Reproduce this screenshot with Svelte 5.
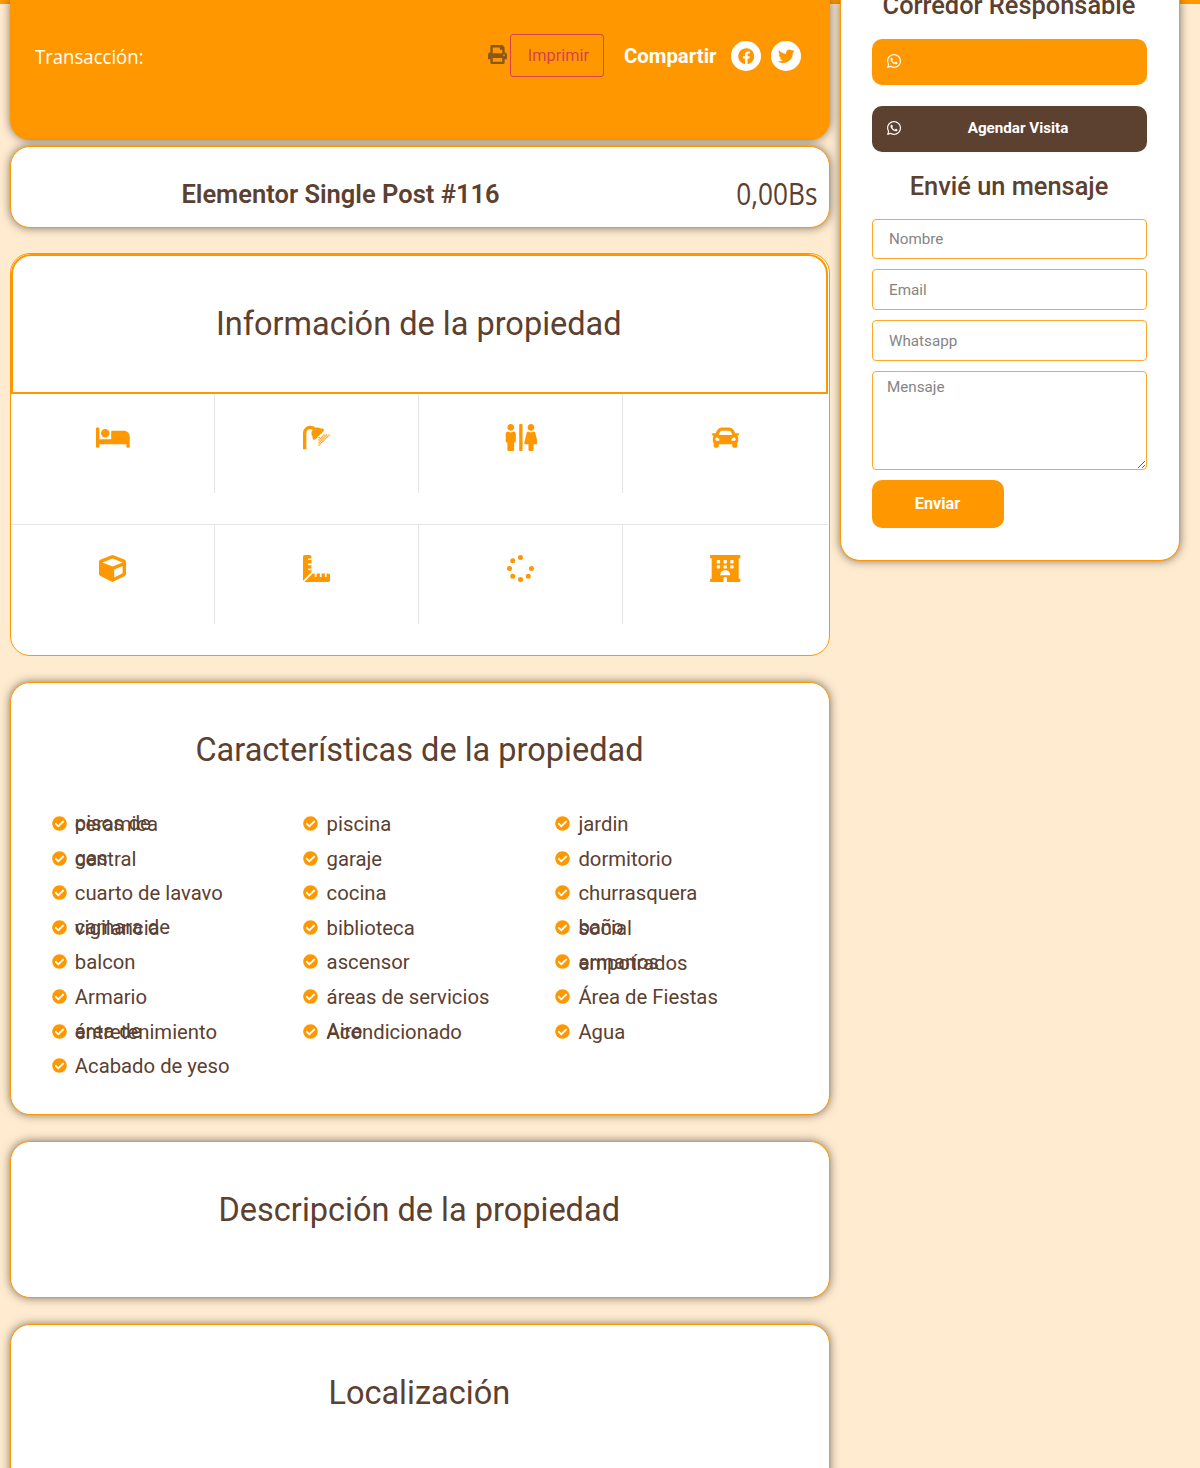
<script>
  const whatsapp =
    'M380.9 97.1C339 55.1 283.2 32 223.9 32c-122.4 0-222 99.6-222 222 0 39.1 10.2 77.3 29.6 111L0 480l117.7-30.9c32.4 17.7 68.9 27 106.1 27h.1c122.3 0 224.1-99.6 224.1-222 0-59.3-25.2-115-67.1-157zm-157 341.6c-33.2 0-65.7-8.9-94-25.7l-6.7-4-69.8 18.3L72 359.2l-4.4-7c-18.5-29.4-28.2-63.3-28.2-98.2 0-101.7 82.8-184.5 184.6-184.5 49.3 0 95.6 19.2 130.4 54.1 34.8 34.9 56.2 81.2 56.1 130.5 0 101.8-84.9 184.6-186.6 184.6zm101.2-138.2c-5.5-2.8-32.8-16.2-37.9-18-5.1-1.9-8.8-2.8-12.5 2.8-3.7 5.6-14.3 18-17.6 21.8-3.2 3.7-6.5 4.2-12 1.4-32.6-16.3-54-29.1-75.5-66-5.7-9.8 5.7-9.1 16.3-30.3 1.8-3.7.9-6.9-.5-9.7-1.4-2.8-12.5-30.1-17.1-41.2-4.5-10.8-9.1-9.3-12.5-9.5-3.2-.2-6.9-.2-10.6-.2-3.7 0-9.7 1.4-14.8 6.9-5.1 5.6-19.4 19-19.4 46.3 0 27.3 19.9 53.7 22.6 57.4 2.8 3.7 39.1 59.7 94.8 83.8 35.2 15.2 49 16.5 66.6 13.9 10.7-1.6 32.8-13.4 37.4-26.4 4.6-13 4.6-24.1 3.2-26.4-1.3-2.5-5-3.9-10.5-6.6z';
  const facebook =
    'M504 256C504 119 393 8 256 8S8 119 8 256c0 123.78 90.69 226.38 209.25 245V327.69h-63V256h63v-54.64c0-62.15 37-96.48 93.67-96.48 27.14 0 55.52 4.84 55.52 4.84v61h-31.28c-30.8 0-40.41 19.12-40.41 38.73V256h68.78l-11 71.69h-57.78V501C413.31 482.38 504 379.78 504 256z';
  const twitter =
    'M459.37 151.716c.325 4.548.325 9.097.325 13.645 0 138.72-105.583 298.558-298.558 298.558-59.452 0-114.68-17.219-161.137-47.106 8.447.974 16.568 1.299 25.34 1.299 49.055 0 94.213-16.568 130.274-44.832-46.132-.975-84.792-31.188-98.112-72.772 6.498.974 12.995 1.624 19.818 1.624 9.421 0 18.843-1.3 27.614-3.573-48.081-9.747-84.143-51.98-84.143-102.985v-1.299c13.969 7.797 30.214 12.67 47.431 13.319-28.264-18.843-46.781-51.005-46.781-87.391 0-19.492 5.197-37.36 14.294-52.954 51.655 63.675 129.3 105.258 216.365 109.807-1.624-7.797-2.599-15.918-2.599-24.04 0-57.828 46.782-104.934 104.934-104.934 30.213 0 57.502 12.67 76.67 33.137 23.715-4.548 46.456-13.32 66.599-25.34-7.798 24.366-24.366 44.833-46.132 57.827 21.117-2.273 41.584-8.122 60.426-16.243-14.292 20.791-32.161 39.308-52.628 54.253z';
  const printer =
    'M448 192V77.25c0-8.49-3.37-16.62-9.37-22.63L393.37 9.37c-6-6-14.14-9.37-22.63-9.37H96C78.33 0 64 14.33 64 32v160c-35.35 0-64 28.65-64 64v112c0 8.84 7.16 16 16 16h48v96c0 17.67 14.33 32 32 32h320c17.67 0 32-14.33 32-32v-96h48c8.84 0 16-7.16 16-16V256c0-35.35-28.65-64-64-64zm-64 256H128v-96h256v96zm0-224H128V64h192v48c0 8.84 7.16 16 16 16h48v96zm48 72c-13.25 0-24-10.75-24-24 0-13.26 10.75-24 24-24s24 10.74 24 24c0 13.25-10.75 24-24 24z';
  const check =
    'M504 256c0 136.967-111.033 248-248 248S8 392.967 8 256 119.033 8 256 8s248 111.033 248 248zM227.314 387.314l184-184c6.248-6.248 6.248-16.379 0-22.627l-22.627-22.627c-6.248-6.249-16.379-6.249-22.628 0L216 308.118l-70.059-70.059c-6.248-6.248-16.379-6.248-22.628 0l-22.627 22.627c-6.248 6.248-6.248 16.379 0 22.627l104 104c6.249 6.249 16.379 6.249 22.628.001z';

  const dot = (x, y, r) => `M${x - r} ${y}a${r} ${r} 0 1 0 ${2 * r} 0a${r} ${r} 0 1 0 ${-2 * r} 0z`;
  const pane = (x, y) => `M${x + 12} ${y}h40q12 0 12 12v40q0 12-12 12h-40q-12 0-12-12v-40q0-12 12-12z`;

  // Spray droplets below the shower head, staggered row by row.
  const drops = [
    [400, 208], [448, 208], [496, 208],
    [376, 232], [424, 232], [472, 232],
    [304, 256], [352, 256], [400, 256], [448, 256],
    [328, 280], [376, 280], [424, 280],
    [304, 304], [352, 304], [400, 304],
    [328, 328], [376, 328],
    [304, 352], [352, 352],
    [328, 376],
    [304, 400]
  ];

  const facts = [
    {
      w: 640,
      d: 'M176 256c44.11 0 80-35.89 80-80s-35.89-80-80-80-80 35.89-80 80 35.89 80 80 80zm352-128H304c-8.84 0-16 7.16-16 16v144H64V80c0-8.84-7.16-16-16-16H16C7.16 64 0 71.16 0 80v352c0 8.84 7.16 16 16 16h32c8.84 0 16-7.16 16-16v-48h512v48c0 8.84 7.16 16 16 16h32c8.84 0 16-7.16 16-16V240c0-61.86-50.14-112-112-112z'
    },
    {
      w: 512,
      d:
        'M389.66 135.6L231.6 293.66c-9.37 9.37-24.57 9.37-33.94 0l-11.32-11.32c-9.37-9.37-9.37-24.57 0-33.94l.11-.11c-34.03-40.21-35.16-98.94-3.39-140.38-11.97-7.55-26.14-11.91-41.3-11.91C98.88 96 64 130.88 64 173.76V480H0V173.76C0 95.59 63.59 32 141.76 32c36.93 0 71.61 14.2 97.74 39.72 30-7 70-3 104.86 18.28 9.37-9.37 24-7 33.98.34l11.32 11.32c9.37 9.37 9.37 24.57 0 33.94z' +
        drops.map(([x, y]) => dot(x, y, 15)).join('')
    },
    {
      w: 640,
      d: 'M128 128c35.3 0 64-28.7 64-64S163.3 0 128 0 64 28.7 64 64s28.7 64 64 64zm384 0c35.3 0 64-28.7 64-64S547.3 0 512 0s-64 28.7-64 64 28.7 64 64 64zm127.3 226.5l-45.6-185.8c-3.3-13.5-15.5-23-29.8-24.2-15 9.7-32.8 15.5-52 15.5-19.2 0-37-5.8-52-15.5-14.3 1.2-26.5 10.7-29.8 24.2l-45.6 185.8C381 369.6 393 384 409.2 384H464v104c0 13.3 10.7 24 24 24h48c13.3 0 24-10.7 24-24V384h54.8c16.2 0 28.2-14.4 24.5-29.5zM336 0h-32c-8.8 0-16 7.2-16 16v480c0 8.8 7.2 16 16 16h32c8.8 0 16-7.2 16-16V16c0-8.8-7.2-16-16-16zM180.1 144.4c-15 9.8-32.9 15.6-52.1 15.6-19.2 0-37.1-5.8-52.1-15.6C51.3 146.5 32 166.9 32 192v136c0 13.3 10.7 24 24 24h8v136c0 13.3 10.7 24 24 24h80c13.3 0 24-10.7 24-24V352h8c13.3 0 24-10.7 24-24V192c0-25.1-19.3-45.5-43.9-47.6z'
    },
    {
      w: 512,
      d: 'M499.99 176h-59.87l-16.64-41.6C406.38 91.63 365.57 64 319.5 64h-127c-46.06 0-86.88 27.63-103.99 70.4L71.87 176H12.01C4.2 176-1.53 183.34.37 190.91l6 24C7.7 220.25 12.5 224 18.01 224h20.07C24.65 235.73 16 252.78 16 272v48c0 16.12 6.16 30.67 16 41.93V416c0 17.67 14.33 32 32 32h32c17.67 0 32-14.33 32-32v-32h256v32c0 17.67 14.33 32 32 32h32c17.67 0 32-14.33 32-32v-54.07c9.84-11.25 16-25.8 16-41.93v-48c0-19.22-8.65-36.27-22.07-48H494c5.51 0 10.31-3.75 11.64-9.09l6-24c1.89-7.57-3.84-14.91-11.65-14.91zm-352.06-17.83c7.29-18.22 24.94-30.17 44.57-30.17h127c19.63 0 37.28 11.95 44.57 30.17L384 208H128l19.93-49.83zM96 319.8c-19.2 0-32-12.76-32-31.9S76.8 256 96 256s48 28.71 48 47.85-28.8 15.95-48 15.95zm320 0c-19.2 0-48 3.19-48-15.95S396.8 256 416 256s32 12.76 32 31.9-12.8 31.9-32 31.9z'
    },
    {
      w: 512,
      d: 'M239.1 6.3l-208 78c-18.7 7-31.1 25-31.1 45v225.1c0 18.2 10.3 34.8 26.5 42.9l208 104c13.5 6.8 29.4 6.8 42.9 0l208-104c16.3-8.1 26.5-24.8 26.5-42.9V129.3c0-20-12.4-37.9-31.1-44.9l-208-78C262 2.2 250 2.2 239.1 6.3zM256 68.4l192 72v1.1l-192 78-192-78v-1.1l192-72zm32 356V275.5l160-65v133.9l-160 80z'
    },
    {
      w: 512,
      d: 'M160 288h-56c-4.42 0-8-3.58-8-8v-16c0-4.42 3.58-8 8-8h56v-64h-56c-4.42 0-8-3.58-8-8v-16c0-4.42 3.58-8 8-8h56V96h-56c-4.42 0-8-3.58-8-8V72c0-4.42 3.58-8 8-8h56V32c0-17.67-14.33-32-32-32H32C14.33 0 0 14.33 0 32v448c0 2.77.91 5.24 1.57 7.8L160 329.38V288zm320 64h-32v56c0 4.42-3.58 8-8 8h-16c-4.42 0-8-3.58-8-8v-56h-64v56c0 4.42-3.58 8-8 8h-16c-4.42 0-8-3.58-8-8v-56h-64v56c0 4.42-3.58 8-8 8h-16c-4.42 0-8-3.58-8-8v-56h-41.37L24.2 510.43c2.56.66 5.04 1.57 7.8 1.57h448c17.67 0 32-14.33 32-32v-96c0-17.67-14.33-32-32-32z'
    },
    {
      w: 512,
      d: [[256, 48], [256, 464], [48, 256], [464, 256], [109, 109], [109, 403], [403, 403]]
        .map(([x, y]) => dot(x, y, 48))
        .join('')
    },
    {
      w: 576,
      d:
        'M560 64c8.84 0 16-7.16 16-16V16c0-8.84-7.16-16-16-16H16C7.16 0 0 7.16 0 16v32c0 8.84 7.16 16 16 16h15.98v384H16c-8.84 0-16 7.16-16 16v32c0 8.84 7.16 16 16 16h240v-80c0-8.8 7.2-16 16-16h32c8.8 0 16 7.2 16 16v80h240c8.84 0 16-7.16 16-16v-32c0-8.84-7.16-16-16-16h-16V64h16z' +
        [128, 256, 384].map((x) => pane(x, 96) + pane(x, 192)).join('') +
        'M208 384q-18 0-14-16a95 90 0 0 1 188 0q4 16-14 16z'
    }
  ];

  // A feature with two entries stacks both lines on top of each other.
  const features = [
    [['pisos de', 'ceramica'], ['gas', 'central'], ['cuarto de lavavo'], ['camara de', 'vigilancia'], ['balcon'], ['Armario'], ['área de', 'entretenimiento'], ['Acabado de yeso']],
    [['piscina'], ['garaje'], ['cocina'], ['biblioteca'], ['ascensor'], ['áreas de servicios'], ['Aire', 'Acondicionado']],
    [['jardin'], ['dormitorio'], ['churrasquera'], ['baño', 'social'], ['armaríos', 'empotrados'], ['Área de Fiestas'], ['Agua']]
  ];
</script>

{#snippet icon(d, w, cls)}
  <svg class={cls} viewBox="0 0 {w} 512" aria-hidden="true"><path fill-rule="evenodd" {d} /></svg>
{/snippet}

<div class="page">
  <div class="stripe"></div>
  <div class="columns">
    <main>
      <section class="hero">
        <span class="transaction">Transacción:</span>
        {@render icon(printer, 512, 'printer')}
        <button class="print">Imprimir</button>
        <strong class="share">Compartir</strong>
        <a class="social" href="#facebook" aria-label="Facebook">{@render icon(facebook, 512, 'social-icon')}</a>
        <a class="social" href="#twitter" aria-label="Twitter">{@render icon(twitter, 512, 'social-icon')}</a>
      </section>

      <section class="card title">
        <h1>Elementor Single Post #116</h1>
        <span class="price">0,00Bs</span>
      </section>

      <section class="card info">
        <div class="info-head"><h2>Información de la propiedad</h2></div>
        <div class="facts">
          {#each facts as fact}
            <div class="fact"><div class="fact-in">{@render icon(fact.d, fact.w, 'fact-icon')}</div></div>
          {/each}
        </div>
      </section>

      <section class="card traits">
        <h2>Características de la propiedad</h2>
        <div class="lists">
          {#each features as column}
            <ul>
              {#each column as lines}
                <li>
                  {@render icon(check, 512, 'check')}
                  <span class="label">{#each lines as line}<span>{line}</span>{/each}</span>
                </li>
              {/each}
            </ul>
          {/each}
        </div>
      </section>

      <section class="card about"><h2>Descripción de la propiedad</h2></section>
      <section class="card place"><h2>Localización</h2></section>
    </main>

    <aside>
      <h3 class="agent">Corredor Responsable</h3>
      <a class="wa" href="#contacto" aria-label="WhatsApp">{@render icon(whatsapp, 448, 'wa-icon')}<span></span></a>
      <a class="wa dark" href="#visita">{@render icon(whatsapp, 448, 'wa-icon')}<span>Agendar Visita</span></a>
      <h3 class="write">Envié un mensaje</h3>
      <form>
        <input placeholder="Nombre" />
        <input placeholder="Email" />
        <input placeholder="Whatsapp" />
        <textarea placeholder="Mensaje"></textarea>
        <button type="button" class="send">Enviar</button>
      </form>
    </aside>
  </div>
</div>

<style>
  :global(body) {
    margin: 0;
    background: #ffebcf;
  }
  .page,
  .page * {
    box-sizing: border-box;
  }
  .page {
    height: 1468px;
    overflow: hidden;
    background: #ffebcf;
    font-family: Roboto, sans-serif;
    color: #5c4030;
  }
  svg {
    display: block;
    fill: currentColor;
    flex: none;
  }
  h1,
  h2,
  h3,
  ul {
    margin: 0;
    padding: 0;
  }
  .stripe {
    height: 4px;
    background: #ff9800;
  }
  .columns {
    display: flex;
    align-items: flex-start;
    gap: 10px;
    margin-top: -4px;
    padding-left: 10px;
  }
  main {
    width: 820px;
    display: flex;
    flex-direction: column;
  }
  .hero {
    height: 140px;
    border-radius: 0 0 20px 20px;
    background: #ff9800;
    box-shadow: 0 0 10px rgba(0, 0, 0, 0.5);
    display: flex;
    align-items: center;
    padding: 0 29px 28px 25px;
    color: #fff;
  }
  .transaction {
    font: 400 20.3px/28px 'Open Sans', sans-serif;
    transform: scaleX(0.915);
    transform-origin: left center;
    padding-bottom: 1px;
    margin-right: auto;
  }
  .printer {
    width: 19px;
    height: 19px;
    color: #8a5818;
    margin: -4px 3px 0 0;
  }
  .print {
    width: 94px;
    height: 43px;
    margin-top: -1px;
    border: 1px solid #d9414e;
    border-radius: 3px;
    background: none;
    color: #d9414e;
    font: 400 16.3px/24px Roboto, sans-serif;
    padding: 0 0 0 3px;
  }
  .share {
    font-size: 20.4px;
    font-weight: 700;
    margin: 0 14.5px 0 20px;
  }
  .social {
    width: 30px;
    height: 30px;
    border-radius: 50%;
    background: #fff;
    color: #ff9800;
    display: grid;
    place-items: center;
  }
  .social + .social {
    margin-left: 10px;
  }
  .social-icon {
    width: 16.5px;
    height: 16.5px;
  }
  .card {
    background: #fff;
    border: 1px solid #ff9800;
    border-radius: 20px;
    box-shadow: 0 0 10px rgba(0, 0, 0, 0.5);
  }
  .title {
    height: 82px;
    margin-top: 5.5px;
    display: grid;
    grid-template-columns: 659px 1fr;
    align-items: center;
    padding: 13px 12px 0 0;
  }
  h1 {
    padding-top: 1px;
    text-align: center;
    font-size: 25.5px;
    font-weight: 600;
    line-height: 30px;
  }
  .price {
    justify-self: end;
    font: 400 30.5px/40px 'Open Sans', sans-serif;
    transform: scaleX(0.86);
    transform-origin: right center;
  }
  .info {
    height: 403px;
    margin-top: 25.5px;
    box-shadow: none;
  }
  .info-head {
    height: 139.5px;
    margin-right: 1px;
    border: 2px solid #ff9800;
    border-radius: 20px 20px 0 0;
    display: grid;
    place-items: center;
  }
  h2 {
    padding-right: 1.5px;
    text-align: center;
    font-size: 32.5px;
    font-weight: 400;
    line-height: 40px;
  }
  .facts {
    display: grid;
    grid-template-columns: 204.4px 203.6px 204px 1fr;
    padding-right: 1px;
  }
  .fact {
    height: 130.5px;
  }
  .fact:nth-child(n + 5) {
    border-top: 1px solid #e6e6e6;
  }
  .fact-in {
    height: 99px;
    display: flex;
    justify-content: center;
    padding-top: 30px;
    border-right: 1px solid #e6e6e6;
  }
  .fact:nth-child(4n) .fact-in {
    border-right: 0;
  }
  .fact-icon {
    height: 27px;
    color: #ff9800;
  }
  .traits {
    height: 433.5px;
    margin-top: 25.5px;
    padding: 47px 40px 0 40.5px;
  }
  .lists {
    display: grid;
    grid-template-columns: repeat(3, 251.8px);
    margin-top: 37.2px;
  }
  ul {
    list-style: none;
  }
  li {
    height: 34.6px;
    display: flex;
    align-items: center;
  }
  .check {
    width: 15px;
    height: 15px;
    color: #ff9800;
    margin: -1px 8.3px 0 0;
  }
  .label {
    padding-top: 1px;
    font-size: 20.3px;
    line-height: 1px;
    white-space: nowrap;
  }
  .label span {
    display: block;
  }
  .about {
    height: 157px;
    margin-top: 26px;
    padding-top: 48px;
  }
  .place {
    height: 240px;
    margin-top: 26px;
    padding-top: 48px;
  }
  aside {
    position: relative;
    width: 339.5px;
    height: 561px;
    background: #fff;
    border: 1px solid #ff9800;
    border-top: 0;
    border-radius: 0 0 20px 20px;
    box-shadow: 0 0 10px rgba(0, 0, 0, 0.5);
    padding: 0 32px 0 30.5px;
  }
  h3 {
    text-align: center;
    font-size: 25.4px;
    font-weight: 500;
    line-height: 30px;
  }
  .agent {
    margin: -10px -10px 0;
  }
  .wa {
    height: 46.5px;
    margin-top: 18.7px;
    border-radius: 10px;
    background: #ff9800;
    color: #fff;
    text-decoration: none;
    display: flex;
    align-items: center;
    padding: 0 11px 2px 15px;
    font-size: 15.2px;
    font-weight: 700;
  }
  .wa span {
    flex: 1;
    text-align: center;
  }
  .wa.dark {
    margin-top: 20.5px;
    background: #5c4030;
  }
  .wa-icon {
    height: 16px;
  }
  .write {
    margin: 18.4px 0 18px;
  }
  form {
    display: flex;
    flex-direction: column;
    gap: 10px;
  }
  input,
  textarea {
    display: block;
    width: 100%;
    height: 40.8px;
    border: 1px solid #ffa726;
    border-radius: 4px;
    background: #fff;
    font: 400 15.2px/21px Roboto, sans-serif;
    padding: 0 16.5px;
    outline: 0;
  }
  textarea {
    height: 99px;
    padding: 5px 14.5px;
    resize: vertical;
  }
  input::placeholder,
  textarea::placeholder {
    color: #858585;
  }
  .send {
    width: 132px;
    height: 48px;
    border: 0;
    border-radius: 10px;
    background: #ff9800;
    color: #fff;
    font: 700 16.3px/20px Roboto, sans-serif;
  }
</style>
